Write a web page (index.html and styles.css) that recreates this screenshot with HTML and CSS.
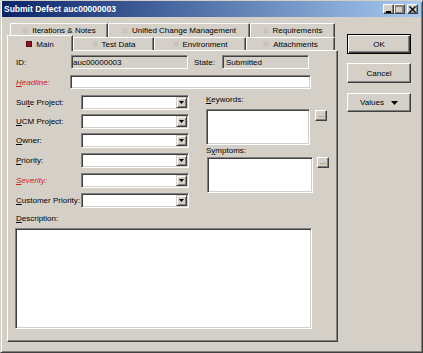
FILE: index.html
```html
<!DOCTYPE html>
<html>
<head>
<meta charset="utf-8">
<title>Submit Defect</title>
<link rel="stylesheet" href="styles.css">
</head>
<body>
<div class="window">
  <div class="titlebar">
    <span class="title">Submit Defect auc00000003</span>
    <div class="tbtns">
      <span class="tbtn"><svg width="8" height="7" viewBox="0 0 8 7"><rect x="1" y="5" width="5" height="2" fill="#000"/></svg></span>
      <span class="tbtn"><svg width="9" height="8" viewBox="0 0 9 8"><path d="M0.5 1.5h7v6h-7z" fill="none" stroke="#808080"/><rect x="0" y="0" width="8" height="2" fill="#808080"/></svg></span>
      <span class="tbtn close"><svg width="8" height="7" viewBox="0 0 8 7"><path d="M0.5 0.5l6 6M6.5 0.5l-6 6" stroke="#000" stroke-width="1.4"/></svg></span>
    </div>
  </div>
  <div class="main">
    <div class="tabarea">
      <div class="tabrow back">
        <div class="tab t-it"><i class="ico"></i><span>Iterations &amp; Notes</span></div>
        <div class="tab t-ucm"><i class="ico"></i><span>Unified Change Management</span></div>
        <div class="tab t-req"><i class="ico"></i><span>Requirements</span></div>
      </div>
      <div class="tabrow front">
        <div class="tab sel t-main"><i class="ico red"></i><span>Main</span></div>
        <div class="tab t-td"><i class="ico"></i><span>Test Data</span></div>
        <div class="tab t-env"><i class="ico"></i><span>Environment</span></div>
        <div class="tab t-att"><i class="ico"></i><span>Attachments</span></div>
      </div>
      <div class="panel">
        <div class="row">
          <span class="lbl l-id">ID:</span>
          <div class="field dis f-id">auc00000003</div>
          <span class="lbl l-state">State:</span>
          <div class="field dis f-state">Submitted</div>
        </div>
        <div class="row r-head">
          <span class="lbl l-head req"><u>H</u>eadline:</span>
          <div class="field f-head"></div>
        </div>
        <div class="section">
          <div class="leftcol">
            <div class="crow"><span class="clbl">Sui<u>t</u>e Project:</span><div class="combo"><span class="drop"><svg width="5" height="3" viewBox="0 0 5 3"><path d="M0 0h5L2.5 3z" fill="#000"/></svg></span></div></div>
            <div class="crow"><span class="clbl"><u>U</u>CM Project:</span><div class="combo"><span class="drop"><svg width="5" height="3" viewBox="0 0 5 3"><path d="M0 0h5L2.5 3z" fill="#000"/></svg></span></div></div>
            <div class="crow"><span class="clbl"><u>O</u>wner:</span><div class="combo"><span class="drop"><svg width="5" height="3" viewBox="0 0 5 3"><path d="M0 0h5L2.5 3z" fill="#000"/></svg></span></div></div>
            <div class="crow g5"><span class="clbl"><u>P</u>riority:</span><div class="combo"><span class="drop"><svg width="5" height="3" viewBox="0 0 5 3"><path d="M0 0h5L2.5 3z" fill="#000"/></svg></span></div></div>
            <div class="crow g5"><span class="clbl req"><u>S</u>everity:</span><div class="combo"><span class="drop"><svg width="5" height="3" viewBox="0 0 5 3"><path d="M0 0h5L2.5 3z" fill="#000"/></svg></span></div></div>
            <div class="crow g5"><span class="clbl"><u>C</u>ustomer Priority:</span><div class="combo tall"><span class="drop"><svg width="5" height="3" viewBox="0 0 5 3"><path d="M0 0h5L2.5 3z" fill="#000"/></svg></span></div></div>
          </div>
          <div class="rightcol">
            <span class="kw-lbl"><u>K</u>eywords:</span>
            <div class="tarow">
              <div class="ta kw"></div>
              <span class="ell">...</span>
            </div>
            <span class="sym-lbl">S<u>y</u>mptoms:</span>
            <div class="tarow sym-row">
              <div class="ta sym"></div>
              <span class="ell ell2">...</span>
            </div>
          </div>
        </div>
        <span class="desc-lbl"><u>D</u>escription:</span>
        <div class="ta desc"></div>
      </div>
    </div>
    <div class="btns">
      <div class="btn ok">OK</div>
      <div class="btn cancel">Cancel</div>
      <div class="btn values"><span>Values</span><svg width="7" height="4" viewBox="0 0 7 4"><path d="M0 0h7L3.5 4z" fill="#000"/></svg></div>
    </div>
  </div>
</div>
</body>
</html>
```

FILE: styles.css
```css
* { box-sizing: border-box; margin: 0; padding: 0; }
html, body { width: 423px; height: 353px; overflow: hidden; }
body {
  background: #D4D0C8;
  font-family: "Liberation Sans", Arial, sans-serif;
  font-size: 8px;
  color: #000;
}
u { text-decoration: underline; }

.window {
  width: 423px;
  height: 353px;
  background: #D4D0C8;
  border: 1px solid;
  border-color: #D4D0C8 #404040 #404040 #D4D0C8;
  box-shadow: inset 1px 1px #fff, inset -1px -1px #808080;
  padding: 0 1px;
  display: flex;
  flex-direction: column;
}

.titlebar {
  height: 16px;
  flex: none;
  background: linear-gradient(to right, #0A246A, #A6CAF0);
  display: flex;
  align-items: center;
  justify-content: space-between;
  padding: 0 3px 0 2px;
}
.title { color: #fff; font-weight: bold; font-size: 8.5px; }
.tbtns { display: flex; align-items: center; }
.tbtn {
  width: 11px;
  height: 10px;
  background: #D4D0C8;
  border: 1px solid;
  border-color: #fff #404040 #404040 #fff;
  box-shadow: inset -1px -1px #808080;
  display: flex;
  align-items: center;
  justify-content: center;
}
.tbtn svg { display: block; }
.tbtn.close { margin-left: 2px; }

.main { display: flex; flex: 1; }

.tabarea { margin: 6px 0 0 5px; width: 331px; display: flex; flex-direction: column; }
.tabrow { display: flex; flex: none; }
.back { height: 14px; padding-left: 3px; }
.front { height: 13px; }
.tab {
  display: flex;
  align-items: center;
  justify-content: center;
  gap: 4px;
  border: 1px solid;
  border-color: #fff #404040 transparent #fff;
  border-bottom: none;
  box-shadow: inset -1px 0 #808080;
  background: #D4D0C8;
  white-space: nowrap;
}
.ico {
  width: 6px;
  height: 6px;
  background: #C8C4BC;
  border: 1px solid #CFCBC4;
  flex: none;
}
.ico.red { background: #8A1626; border-color: #5A0A14; }
.t-it { width: 98px; }
.t-ucm { width: 142px; }
.t-req { width: 85px; }
.t-main { width: 66px; }
.t-td { width: 81px; }
.t-env { width: 92px; }
.t-att { width: 89px; }
.tab.sel {
  height: 16px;
  margin-top: -2px;
  position: relative;
  z-index: 1;
  padding-top: 1px;
}

.panel {
  height: 292px;
  flex: none;
  border: 1px solid;
  border-color: #fff #404040 #404040 #fff;
  box-shadow: inset -1px -1px #808080;
  padding: 4px 0 0 8px;
  display: flex;
  flex-direction: column;
}

.row { display: flex; align-items: center; height: 14px; flex: none; }
.r-head { margin-top: 6px; }
.lbl { flex: none; }
.l-id { width: 55px; }
.l-state { width: 28px; margin-left: 6px; }
.l-head { width: 54px; }
.req { color: #CC2424; font-style: italic; }

.field {
  height: 14px;
  border: 1px solid;
  border-color: #808080 #fff #fff #808080;
  box-shadow: inset 1px 1px #404040, inset -1px -1px #D4D0C8;
  background: #fff;
  display: flex;
  align-items: center;
  padding-left: 2px;
}
.field.dis { background: #D4D0C8; }
.f-id { width: 117px; padding-left: 1px; }
.f-state { width: 87px; padding-left: 3px; }
.f-head { width: 241px; }

.section { display: flex; margin-top: 6px; flex: none; }
.leftcol { width: 173px; display: flex; flex-direction: column; }
.crow { display: flex; align-items: center; height: 15px; margin-top: 4px; }
.crow:first-child { margin-top: 0; }
.crow.g5 { margin-top: 5px; }
.clbl { width: 65px; flex: none; white-space: nowrap; }
.combo {
  width: 108px;
  height: 15px;
  border: 1px solid;
  border-color: #808080 #fff #fff #808080;
  box-shadow: inset 1px 1px #404040, inset -1px -1px #D4D0C8;
  background: #fff;
  padding: 1px;
  display: flex;
  justify-content: flex-end;
}
.drop {
  width: 11px;
  height: 11px;
  background: #D4D0C8;
  border: 1px solid;
  border-color: #D4D0C8 #404040 #404040 #D4D0C8;
  box-shadow: inset 1px 1px #fff, inset -1px -1px #808080;
  display: flex;
  align-items: center;
  justify-content: center;
}
.drop svg { display: block; }

.rightcol { margin-left: 17px; display: flex; flex-direction: column; }
.kw-lbl { height: 14px; line-height: 10px; }
.tarow { display: flex; align-items: flex-start; }
.ta {
  background: #fff;
  border: 1px solid;
  border-color: #808080 #fff #fff #808080;
  box-shadow: inset 1px 1px #404040, inset -1px -1px #D4D0C8;
}
.kw { width: 104px; height: 36px; }
.sym-lbl { height: 12px; line-height: 12px; }
.sym-row { margin-left: 1px; }
.sym { width: 106px; height: 36px; }
.ell {
  width: 12px;
  height: 11px;
  margin: 1px 0 0 5px;
  background: #D4D0C8;
  border: 1px solid;
  border-color: #fff #404040 #404040 #fff;
  box-shadow: inset -1px -1px #808080;
  font-size: 7px;
  line-height: 7px;
  text-align: center;
  color: #404040;
}
.ell2 { margin: 0 0 0 4px; }

.desc-lbl { margin-top: 6px; height: 10px; line-height: 10px; flex: none; }
.desc { width: 297px; height: 101px; margin: 4px 0 0 -1px; flex: none; }

.btns { margin: 17px 0 0 9px; width: 64px; display: flex; flex-direction: column; }
.btn {
  height: 20px;
  background: #D4D0C8;
  border: 1px solid;
  border-color: #fff #404040 #404040 #fff;
  box-shadow: inset -1px -1px #808080;
  display: flex;
  align-items: center;
  justify-content: center;
}
.btn.ok {
  border: 1px solid #000;
  box-shadow: inset 1px 1px #fff, inset -1px -1px #404040, inset -2px -2px #808080;
}
.btn.cancel { margin-top: 9px; }
.btn.values { margin-top: 10px; height: 19px; gap: 7px; }
.btn.values svg { display: block; }
```
